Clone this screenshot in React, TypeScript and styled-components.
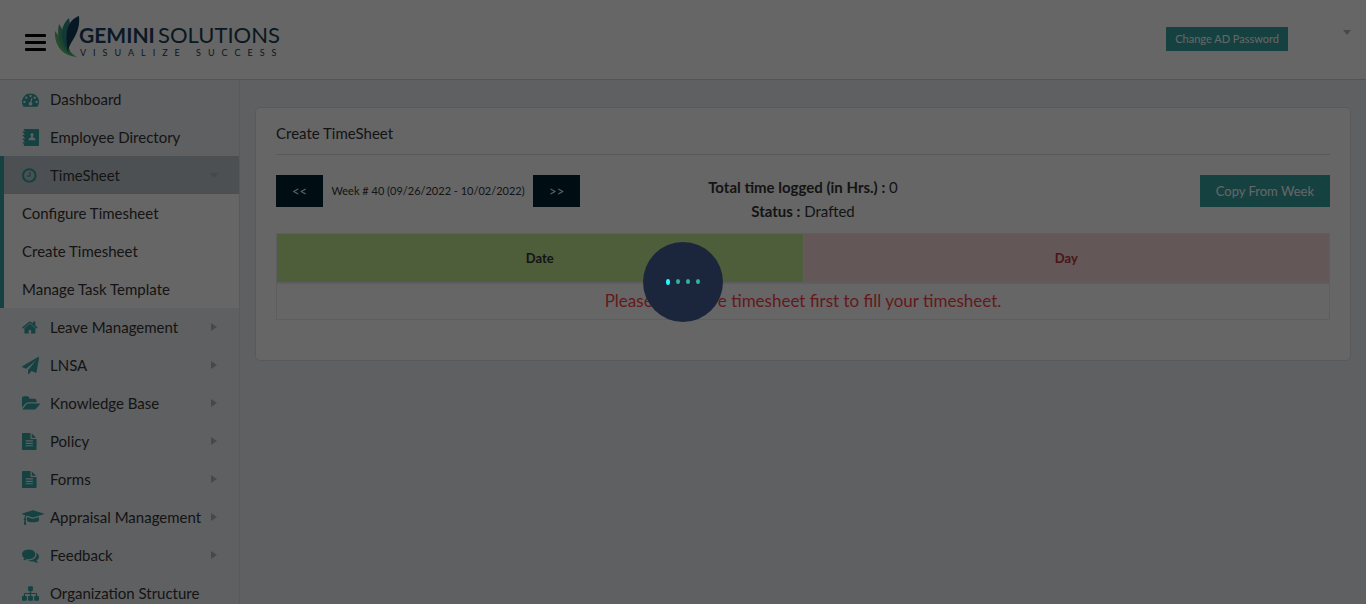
import React from "react";
import styled, { createGlobalStyle, css } from "styled-components";

const teal = "#35a2a4";
const line = "#d8e2e7";
const softLine = "#e6ebef";

const GlobalStyle = createGlobalStyle`
  *, *::before, *::after { box-sizing: border-box; }
  body {
    margin: 0;
    background: #eceff4;
    color: #343434;
    font-family: Lato, "Liberation Sans", sans-serif;
    font-size: 15px;
    line-height: 24px;
  }
  a { color: inherit; text-decoration: none; }
  button { font-family: inherit; cursor: pointer; }
`;

const Shell = styled.div`
  display: flex;
  flex-direction: column;
  height: 100vh;
  overflow: hidden;
`;

const Header = styled.header`
  display: flex;
  align-items: flex-start;
  justify-content: space-between;
  flex: none;
  height: 80px;
  padding: 0 15px 0 25px;
  background: #fff;
  border-bottom: 1px solid #c5d6de;
`;

const Brand = styled.div`
  display: flex;
  align-items: flex-start;
  gap: 9px;
  padding-top: 15px;
`;

const MenuToggle = styled.button`
  display: flex;
  flex-direction: column;
  gap: 4px;
  width: 21px;
  margin-top: 19px;
  padding: 0;
  border: 0;
  background: none;
`;

const Bar = styled.span`
  height: 3px;
  border-radius: 1px;
  background: #000;
`;

const Logo = styled.a`
  display: flex;
`;

const HeaderTools = styled.div`
  display: flex;
  align-items: flex-start;
  gap: 55px;
  padding-top: 27px;
`;

const Button = styled.button<{ $tone?: "dark"; $small?: boolean }>`
  height: ${(p) => (p.$small ? 24 : 32)}px;
  padding: 0 ${(p) => (p.$small ? 9 : 16)}px;
  border: 0;
  background: ${(p) => (p.$tone === "dark" ? "#002333" : teal)};
  color: #fff;
  font-size: ${(p) => (p.$small ? 11 : 13)}px;
  line-height: 24px;
`;

const caretShape = css<{ $dir: "down" | "right" }>`
  ${(p) =>
    p.$dir === "down"
      ? "border-width: 5px 4px 0 4px; border-color: currentColor transparent transparent;"
      : "border-width: 4px 0 4px 6px; border-color: transparent transparent transparent currentColor;"}
`;

const Caret = styled.span<{ $dir: "down" | "right" }>`
  flex: none;
  width: 0;
  height: 0;
  border-style: solid;
  ${caretShape}
`;

const ProfileButton = styled.button`
  display: flex;
  padding: 3px 0;
  border: 0;
  background: none;
  color: #adb7be;
`;

const Body = styled.div`
  display: flex;
  flex: 1;
  min-height: 0;
`;

const Sidebar = styled.nav`
  flex: none;
  width: 240px;
  overflow: hidden;
  border-right: 1px solid ${line};
`;

const List = styled.ul`
  margin: 0;
  padding: 0;
  list-style: none;
`;

const Item = styled.li<{ $open?: boolean }>`
  background: ${(p) => (p.$open ? "#fff" : "transparent")};
  box-shadow: ${(p) => (p.$open ? `inset 4px 0 0 ${teal}` : "none")};
`;

const ItemLink = styled.a<{ $open?: boolean }>`
  display: flex;
  align-items: center;
  height: 38px;
  padding: 0 21px 0 22px;
  background: ${(p) => (p.$open ? "#bfc9cf" : "transparent")};
  box-shadow: ${(p) => (p.$open ? `inset 4px 0 0 ${teal}` : "none")};
`;

const IconSlot = styled.span`
  display: flex;
  flex: none;
  width: 28px;
  color: ${teal};
`;

const Label = styled.span`
  flex: 1;
  white-space: nowrap;
`;

const CaretSlot = styled.span<{ $faint?: boolean }>`
  display: flex;
  flex: none;
  justify-content: center;
  width: 8px;
  color: ${(p) => (p.$faint ? "#aab4ba" : "#b0b4b8")};
`;

const Main = styled.main`
  flex: 1;
  min-width: 0;
  padding: 27px 15px;
`;

const Card = styled.section`
  padding: 13px 20px 40px;
  background: #fff;
  border: 1px solid ${line};
  border-radius: 5px;
`;

const CardTitle = styled.h1`
  margin: 0 0 20px;
  padding-bottom: 9px;
  border-bottom: 1px solid ${line};
  font-size: 15px;
  font-weight: 400;
`;

const Toolbar = styled.div`
  display: grid;
  grid-template-columns: 1fr 1fr 1fr;
  align-items: start;
  height: 58px;
`;

const WeekPicker = styled.div`
  display: flex;
  align-items: center;
  gap: 4px;
  white-space: nowrap;
`;

const WeekText = styled.span`
  min-width: 202px;
  font-size: 11px;
  text-align: center;
`;

const Summary = styled.div`
  text-align: center;
`;

const ToolbarEnd = styled.div`
  display: flex;
  justify-content: flex-end;
`;

const Table = styled.table`
  width: 100%;
  table-layout: fixed;
  border-collapse: collapse;
  text-align: center;
`;

const HeadCell = styled.th<{ $tone: "green" | "red" }>`
  height: 49px;
  padding: 0;
  border: 1px solid ${softLine};
  border-bottom-width: 2px;
  background: ${(p) => (p.$tone === "green" ? "#c3eb94" : "#f8d9d9")};
  color: ${(p) => (p.$tone === "green" ? "#343434" : "#b9353c")};
  font-size: 13px;
`;

const MessageCell = styled.td`
  height: 37px;
  padding: 0;
  border: 1px solid ${softLine};
  color: #fa424a;
  font-size: 17px;
`;

const Overlay = styled.div`
  position: fixed;
  inset: 0;
  background: rgba(0, 0, 0, 0.6);
`;

const Loader = styled.div`
  position: fixed;
  top: 40%;
  left: 50%;
  display: flex;
  align-items: center;
  justify-content: center;
  gap: 6px;
  width: 80px;
  height: 80px;
  margin-left: -40px;
  border-radius: 50%;
  background: #1b263d;
`;

const Dot = styled.span<{ $lit?: boolean }>`
  width: 4px;
  height: ${(p) => (p.$lit ? 6 : 5)}px;
  border-radius: 50%;
  background: ${(p) => (p.$lit ? "#1ffcff" : "#2bb5a8")};
`;

type IconName =
  | "gauge" | "book" | "clock" | "home" | "plane" | "folder"
  | "file" | "cap" | "comments" | "sitemap";

const icons: Record<IconName, { x: number; w: number; d: string }> = {
  gauge: { x: 0, w: 1792, d: "M384 1152q0-53-37.5-90.5t-90.5-37.5-90.5 37.5-37.5 90.5 37.5 90.5 90.5 37.5 90.5-37.5 37.5-90.5zm192-448q0-53-37.5-90.5t-90.5-37.5-90.5 37.5-37.5 90.5 37.5 90.5 90.5 37.5 90.5-37.5 37.5-90.5zm428 481l101-382q6-26-7.5-48.5t-38.5-29.5-48 6.5-30 39.5l-101 382q-60 5-107 43.5t-63 98.5q-20 77 20 146t117 89 146-20 89-117q16-60-6-117t-72-91zm660-33q0-53-37.5-90.5t-90.5-37.5-90.5 37.5-37.5 90.5 37.5 90.5 90.5 37.5 90.5-37.5 37.5-90.5zm-640-640q0-53-37.5-90.5t-90.5-37.5-90.5 37.5-37.5 90.5 37.5 90.5 90.5 37.5 90.5-37.5 37.5-90.5zm448 192q0-53-37.5-90.5t-90.5-37.5-90.5 37.5-37.5 90.5 37.5 90.5 90.5 37.5 90.5-37.5 37.5-90.5zm320 448q0 261-141 483-19 29-54 29h-1402q-35 0-54-29-141-221-141-483 0-182 71-348t191-286 286-191 348-71 348 71 286 191 191 286 71 348z" },
  book: { x: 0, w: 1792, d: "M256 0H1696Q1792 0 1792 96V1696Q1792 1792 1696 1792H256Q192 1792 192 1728V1536H96Q64 1536 64 1504V1440Q64 1408 96 1408H320V1344H192V1152H96Q64 1152 64 1120V1056Q64 1024 96 1024H320V960H192V768H96Q64 768 64 736V672Q64 640 96 640H320V576H192V384H96Q64 384 64 352V288Q64 256 96 256H320V192H192V64Q192 0 256 0zM1056 416Q900 416 900 610Q900 740 970 806V880L800 940Q704 976 704 1110V1184H1408V1110Q1408 976 1312 940L1142 880V806Q1212 740 1212 610Q1212 416 1056 416z" },
  clock: { x: 128, w: 1536, d: "M1024 544v448q0 14-9 23t-23 9h-320q-14 0-23-9t-9-23v-64q0-14 9-23t23-9h224v-352q0-14 9-23t23-9h64q14 0 23 9t9 23zm416 352q0-148-73-273t-198-198-273-73-273 73-198 198-73 273 73 273 198 198 273 73 273-73 198-198 73-273zm224 0q0 209-103 385.5t-279.5 279.5-385.5 103-385.5-103-279.5-279.5-103-385.5 103-385.5 279.5-279.5 385.5-103 385.5 103 279.5 279.5 103 385.5z" },
  home: { x: 64, w: 1664, d: "M1472 992v480q0 26-19 45t-45 19h-384v-384h-256v384h-384q-26 0-45-19t-19-45v-480q0-1 .5-3t.5-3l575-474 575 474q1 2 1 6zm223-69l-62 74q-8 9-21 11h-3q-13 0-21-7l-692-577-692 577q-12 8-24 7-13-2-21-11l-62-74q-8-10-7-23.5t11-21.5l719-599q32-26 76-26t76 26l244 204v-195q0-14 9-23t23-9h192q14 0 23 9t9 23v408l219 182q10 8 11 21.5t-7 23.5z" },
  plane: { x: 0, w: 1792, d: "M1764 11q33 24 27 64l-256 1536q-5 29-32 45-14 8-31 8-11 0-24-5l-453-185-242 295q-18 23-49 23-13 0-22-4-19-7-30.5-23.5t-11.5-36.5v-349l864-1059-1069 925-395-162q-37-14-40-55-2-40 32-59l1664-960q15-9 32-9 20 0 36 11z" },
  folder: { x: 0, w: 1920, d: "M1879 952q0 31-31 66l-336 396q-43 51-120.5 86.5t-143.5 35.5h-1088q-34 0-60.5-13t-26.5-43q0-31 31-66l336-396q43-51 120.5-86.5t143.5-35.5h1088q34 0 60.5 13t26.5 43zm-343-344v160h-832q-94 0-197 47.5t-164 119.5l-337 396-5 6q0-4-.5-12.5t-.5-12.5v-960q0-92 66-158t158-66h320q92 0 158 66t66 158v32h544q92 0 158 66t66 158z" },
  file: { x: 128, w: 1536, d: "M1596 476q14 14 28 36h-472v-472q22 14 36 28zm-476 164h544v1056q0 40-28 68t-68 28h-1344q-40 0-68-28t-28-68v-1600q0-40 28-68t68-28h800v544q0 40 28 68t68 28zm160 736v-64q0-14-9-23t-23-9h-704q-14 0-23 9t-9 23v64q0 14 9 23t23 9h704q14 0 23-9t9-23zm0-256v-64q0-14-9-23t-23-9h-704q-14 0-23 9t-9 23v64q0 14 9 23t23 9h704q14 0 23-9t9-23zm0-256v-64q0-14-9-23t-23-9h-704q-14 0-23 9t-9 23v64q0 14 9 23t23 9h704q14 0 23-9t9-23z" },
  cap: { x: 0, w: 2304, d: "M1774 836l18 316q4 69-82 128t-235 93.5-323 34.5-323-34.5-235-93.5-82-128l18-316 574 181q22 7 48 7t48-7zm530-324q0 23-22 31l-1120 352q-4 1-10 1t-10-1l-652-206q-43 34-71 111.5t-34 178.5q63 36 63 109 0 69-58 107l58 433q2 14-8 25-9 11-24 11h-192q-15 0-24-11-10-11-8-25l58-433q-58-38-58-107 0-73 65-111 11-207 98-330l-333-104q-22-8-22-31t22-31l1120-352q4-1 10-1t10 1l1120 352q22 8 22 31z" },
  comments: { x: 0, w: 1792, d: "M1408 768q0 139-94 257t-256.5 186.5-353.5 68.5q-86 0-176-16-124 88-278 128-36 9-86 16h-3q-11 0-20.5-8t-11.5-21q-1-3-1-6.5t.5-6.5 2-6l2.5-5 3.5-5.5 4-5 4.5-5 4-4.5q5-6 23-25t26-29.5 22.5-29 25-38.5 20.5-44q-124-72-195-177t-71-224q0-139 94-257t256.5-186.5 353.5-68.5 353.5 68.5 256.5 186.5 94 257zm384 256q0 120-71 224.5t-195 176.5q10 24 20.5 44t25 38.5 22.5 29 26 29.5 23 25q1 1 4 4.5t4.5 5 4 5 3.5 5.5l2.5 5 2 6 .5 6.5-1 6.5q-3 14-13 22t-22 7q-50-7-86-16-154-40-278-128-90 16-176 16-271 0-472-132 58 4 88 4 161 0 309-45t264-129q125-92 192-212t67-254q0-77-23-152 129 71 204 178t75 230z" },
  sitemap: { x: 0, w: 1792, d: "M1792 1248v320q0 40-28 68t-68 28h-320q-40 0-68-28t-28-68v-320q0-40 28-68t68-28h96v-192h-512v192h96q40 0 68 28t28 68v320q0 40-28 68t-68 28h-320q-40 0-68-28t-28-68v-320q0-40 28-68t68-28h96v-192h-512v192h96q40 0 68 28t28 68v320q0 40-28 68t-68 28h-320q-40 0-68-28t-28-68v-320q0-40 28-68t68-28h96v-192q0-52 38-90t90-38h512v-192h-96q-40 0-68-28t-28-68v-320q0-40 28-68t68-28h320q40 0 68 28t28 68v320q0 40-28 68t-68 28h-96v192h512q52 0 90 38t38 90v192h96q40 0 68 28t28 68z" },
};

function Icon({ name }: { name: IconName }) {
  const { x, w, d } = icons[name];
  return (
    <svg
      height="17"
      width={(17 * w) / 1792}
      viewBox={`${x} 0 ${w} 1792`}
      fill="currentColor"
      fillRule={name === "book" ? "evenodd" : "nonzero"}
      aria-hidden="true"
    >
      <path d={d} />
    </svg>
  );
}

function GeminiLogo() {
  return (
    <svg width="230" height="44" viewBox="0 0 230 44" role="img" aria-label="Gemini Solutions">
      <path d="M0 16C-1 29 6 41 22 42C13 37 9 28 0 16z" fill="#5fb878" />
      <path d="M4 9C1 22 5 34 18 41C11 31 12 20 4 9z" fill="#4aa96c" />
      <path d="M14 3C5 11 4 25 14 38C11 26 17 14 14 3z" fill="#2d8c8c" />
      <path d="M24 1C13 5 9 17 13 37C14 26 26 20 24 1z" fill="#123a5a" />
      <text x="24" y="28" fontFamily="Lato, sans-serif" fontSize="21" fontWeight="700" fill="#17405f">GEMINI</text>
      <text x="103" y="28" fontFamily="Lato, sans-serif" fontSize="22" fill="#1b3c50">SOLUTIONS</text>
      <text x="25" y="41" fontFamily="Lato, sans-serif" fontSize="9" letterSpacing="7" fill="#1b3c50">VISUALIZE SUCCESS</text>
    </svg>
  );
}

type Entry = { label: string; icon: IconName; caret?: boolean; children?: string[] };

const entries: Entry[] = [
  { label: "Dashboard", icon: "gauge" },
  { label: "Employee Directory", icon: "book" },
  {
    label: "TimeSheet",
    icon: "clock",
    caret: true,
    children: ["Configure Timesheet", "Create Timesheet", "Manage Task Template"],
  },
  { label: "Leave Management", icon: "home", caret: true },
  { label: "LNSA", icon: "plane", caret: true },
  { label: "Knowledge Base", icon: "folder", caret: true },
  { label: "Policy", icon: "file", caret: true },
  { label: "Forms", icon: "file", caret: true },
  { label: "Appraisal Management", icon: "cap", caret: true },
  { label: "Feedback", icon: "comments", caret: true },
  { label: "Organization Structure", icon: "sitemap" },
];

export default function App() {
  return (
    <>
      <GlobalStyle />
      <Shell>
        <Header>
          <Brand>
            <MenuToggle aria-label="Toggle menu">
              <Bar />
              <Bar />
              <Bar />
            </MenuToggle>
            <Logo href="#home">
              <GeminiLogo />
            </Logo>
          </Brand>
          <HeaderTools>
            <Button $small>Change AD Password</Button>
            <ProfileButton aria-label="Profile menu">
              <Caret $dir="down" />
            </ProfileButton>
          </HeaderTools>
        </Header>
        <Body>
          <Sidebar>
            <List>
              {entries.map((entry) => {
                const open = !!entry.children;
                return (
                  <Item key={entry.label} $open={open}>
                    <ItemLink href="#" $open={open}>
                      <IconSlot>
                        <Icon name={entry.icon} />
                      </IconSlot>
                      <Label>{entry.label}</Label>
                      {entry.caret && (
                        <CaretSlot $faint={open}>
                          <Caret $dir={open ? "down" : "right"} />
                        </CaretSlot>
                      )}
                    </ItemLink>
                    {entry.children && (
                      <List>
                        {entry.children.map((child) => (
                          <li key={child}>
                            <ItemLink href="#">{child}</ItemLink>
                          </li>
                        ))}
                      </List>
                    )}
                  </Item>
                );
              })}
            </List>
          </Sidebar>
          <Main>
            <Card>
              <CardTitle>Create TimeSheet</CardTitle>
              <Toolbar>
                <WeekPicker>
                  <Button $tone="dark" aria-label="Previous week">&lt;&lt;</Button>
                  <WeekText>Week # 40 (09/26/2022 - 10/02/2022)</WeekText>
                  <Button $tone="dark" aria-label="Next week">&gt;&gt;</Button>
                </WeekPicker>
                <Summary>
                  <div><b>Total time logged (in Hrs.) :</b> 0</div>
                  <div><b>Status :</b> Drafted</div>
                </Summary>
                <ToolbarEnd>
                  <Button>Copy From Week</Button>
                </ToolbarEnd>
              </Toolbar>
              <Table>
                <thead>
                  <tr>
                    <HeadCell $tone="green">Date</HeadCell>
                    <HeadCell $tone="red">Day</HeadCell>
                  </tr>
                </thead>
                <tbody>
                  <tr>
                    <MessageCell colSpan={2}>
                      Please configure timesheet first to fill your timesheet.
                    </MessageCell>
                  </tr>
                </tbody>
              </Table>
            </Card>
          </Main>
        </Body>
      </Shell>
      <Overlay />
      <Loader role="status" aria-label="Loading">
        <Dot $lit />
        <Dot />
        <Dot />
        <Dot />
      </Loader>
    </>
  );
}
